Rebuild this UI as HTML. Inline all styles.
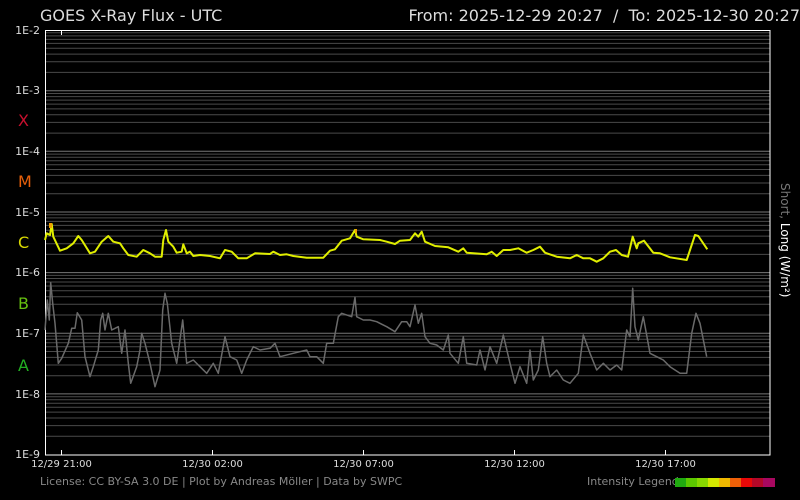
<!DOCTYPE html>
<html><head><meta charset="utf-8"><style>
html,body{margin:0;padding:0;background:#000;width:800px;height:500px;overflow:hidden;font-family:"DejaVu Sans","Liberation Sans",sans-serif}
</style></head><body>
<svg width="800" height="500" style="position:absolute;left:0;top:0">
<defs>
<g id="dec">
<line x1="45" x2="770" y1="2.8" y2="2.8"/><line x1="45" x2="770" y1="5.9" y2="5.9"/>
<line x1="45" x2="770" y1="9.4" y2="9.4"/><line x1="45" x2="770" y1="13.4" y2="13.4"/>
<line x1="45" x2="770" y1="18.2" y2="18.2"/><line x1="45" x2="770" y1="24.1" y2="24.1"/>
<line x1="45" x2="770" y1="31.7" y2="31.7"/><line x1="45" x2="770" y1="42.4" y2="42.4"/>
</g>
</defs>
<g stroke="#4a4a4a" stroke-width="1">
<use href="#dec" y="30"/><use href="#dec" y="90.7"/><use href="#dec" y="151.3"/><use href="#dec" y="212"/>
<use href="#dec" y="272.6"/><use href="#dec" y="333.3"/><use href="#dec" y="393.9"/>
</g>
<g stroke="#777" stroke-width="1">
<line x1="45" x2="770" y1="90.7" y2="90.7"/><line x1="45" x2="770" y1="151.3" y2="151.3"/>
<line x1="45" x2="770" y1="212" y2="212"/><line x1="45" x2="770" y1="272.6" y2="272.6"/>
<line x1="45" x2="770" y1="333.3" y2="333.3"/><line x1="45" x2="770" y1="393.9" y2="393.9"/>
</g>
<rect x="45.5" y="30.5" width="724.5" height="424.5" fill="none" stroke="#fff" stroke-width="1"/>
<g stroke="#fff"><line x1="61.5" x2="61.5" y1="31" y2="35"/>
<line x1="61.5" x2="61.5" y1="450" y2="455"/><line x1="212.5" x2="212.5" y1="450" y2="455"/>
<line x1="363.5" x2="363.5" y1="450" y2="455"/><line x1="514.5" x2="514.5" y1="450" y2="455"/><line x1="665.5" x2="665.5" y1="450" y2="455"/></g>
<polyline fill="none" stroke="#6a6a6a" stroke-width="1.5" stroke-linejoin="round" points="45,330 47.3,300 49.3,320 50.7,282.7 52.7,303.3 55,323.3 58.3,363.3 61.7,358.3 68.3,343.3 71.7,328.3 75,328.3 77.3,312.7 81.7,320 85,356.7 90,376.7 93.3,366.7 98.3,350 100.7,320 102.7,313.3 105,330 108.3,313.3 111.7,330 118.3,326.7 121.7,353.3 125,330 128.3,363.3 130.7,383.3 136.7,366.7 140,350 141.7,333.3 145,343.3 150,363.3 155,386.7 160,370 162.7,310 165,293.3 167.3,303.3 171.7,343.3 176.7,363.3 182.7,320 186.7,363.3 193.3,360 200,366.7 206.7,373.3 213.3,363.3 218.3,373.3 225,336.7 230,356.7 236.7,360 241.7,373.3 246.7,360 253.3,346.7 260,350 270,348.3 275,343.3 280,356.7 293.3,353.3 306.7,350 310,356.7 316.7,356.7 323.3,363.3 326.7,343.3 333.3,343.3 338.3,316.7 341.7,313.3 351.7,316.7 355,297.3 356.7,316.7 363.3,320 370,320 376.7,321.7 386.7,326.7 395,331.7 401.7,321.7 406.7,321.7 410,326.7 415,305 418.3,323.3 421.7,313.3 425,336.7 430,343.3 436.7,345 443.3,350 448.3,335 450,353.3 458.3,363.3 463.3,336.7 466.7,363.3 476.7,365 480,350 485,370 490,346.7 496.7,363.3 503.3,335 510,363.3 515,383.3 520,366.7 526.7,383.3 530,350 533.3,380 538.3,370 542.7,336.7 546.7,363.3 550,376.7 556.7,370 563.3,380 570,383.3 578.3,373.3 583.3,335 590,353.3 596.7,370 603.3,363.3 610,370 616.7,365 621.7,370 626.7,330 630,336.7 632.7,288.3 635,326.7 638.3,340 643.3,316.7 650,353.3 656.7,356.7 663.3,360 670,366.7 680,373.3 686.7,373.3 691.7,333.3 696,313.3 700,323.3 706.7,356.7"/>
<polyline fill="none" stroke="#e0ee00" stroke-width="2" stroke-linejoin="round" points="45,240 46.7,233.3 50,235 51.7,224 53.3,236.7 60,250.7 66.7,248.3 73.3,243.3 78.3,236 81.7,240 90,253.3 95,251.7 101.7,241.7 108.3,236 113.3,241.7 120,243.3 123.3,248.3 128.3,255 136.7,256.7 143.3,250 150,253.3 155,256.7 161.7,256.7 163.3,240 166,230 168.3,241.7 173.3,246.7 176.7,252.7 181.7,251.7 183.3,244.3 186.7,253.3 190,251.7 193.3,256 200,255 210,256 220,258.3 225,250 231.7,251.7 238.3,258.3 246.7,258.3 255,253.3 270,254 273.3,251.7 280,255 286.7,254.3 293.3,256 306.7,257.7 323.3,257.7 330,250.7 335,249.3 341.7,240.7 350,238.3 355,230 356.7,236.7 363.3,239.3 380,240 386.7,241.7 395,244 400,240.7 410,240 415,233.3 418.3,236.7 421.7,231.7 425,241.7 435,246 448.3,247.3 458.3,251.7 463.3,248.3 466.7,252.7 486.7,254.3 491.7,251.7 496.7,256 503.3,250 510,250 518.3,248.3 526.7,252.7 533.3,250 540,246.7 545,252.7 556.7,256.7 570,258.3 576.7,255 583.3,258.3 590,258.3 596.7,261.7 603.3,258.3 610,251.7 616,250 621.7,255 628,256.7 632.7,236.7 636.7,248.3 638.3,243.3 644,240.7 653.3,252.7 660,253.3 670,257.3 686.7,260 686.7,260 695,235 698.3,236 707.3,249.3"/>
<g fill="#f0a000"><rect x="49" y="223" width="3" height="5"/><rect x="355" y="229" width="2" height="4"/></g>
<g fill="#ddd" font-size="11" font-family="DejaVu Sans,Liberation Sans,sans-serif" text-anchor="end">
<text x="40" y="34">1E-2</text><text x="40" y="94">1E-3</text><text x="40" y="155">1E-4</text><text x="40" y="216">1E-5</text>
<text x="40" y="276">1E-6</text><text x="40" y="337">1E-7</text><text x="40" y="398">1E-8</text><text x="40" y="458">1E-9</text>
</g>
<g font-size="16" font-family="DejaVu Sans,Liberation Sans,sans-serif">
<text x="18" y="126" fill="#c8102e">X</text><text x="18" y="187" fill="#e8600a">M</text>
<text x="18" y="248" fill="#d8d800">C</text><text x="18" y="309" fill="#66c010">B</text><text x="18" y="371" fill="#22b022">A</text>
</g>
<g fill="#ddd" font-size="10" font-family="DejaVu Sans,Liberation Sans,sans-serif" text-anchor="middle">
<text x="61.5" y="467">12/29 21:00</text><text x="212.5" y="467">12/30 02:00</text><text x="363.5" y="467">12/30 07:00</text>
<text x="514.5" y="467">12/30 12:00</text><text x="665.5" y="467">12/30 17:00</text>
</g>
<text transform="translate(781,183) rotate(90)" font-size="12" font-family="DejaVu Sans,Liberation Sans,sans-serif"><tspan fill="#777">Short,</tspan><tspan fill="#fff"> Long (W/m²)</tspan></text>
<text x="40" y="21" fill="#ddd" font-size="16" font-family="DejaVu Sans,Liberation Sans,sans-serif">GOES X-Ray Flux - UTC</text>
<text x="800" y="21" fill="#ddd" font-size="16" text-anchor="end" font-family="DejaVu Sans,Liberation Sans,sans-serif" xml:space="preserve">From: 2025-12-29 20:27  /  To: 2025-12-30 20:27</text>
<text x="40" y="485" fill="#888" font-size="11" font-family="DejaVu Sans,Liberation Sans,sans-serif">License: CC BY-SA 3.0 DE | Plot by Andreas Möller | Data by SWPC</text>
<text x="587" y="485" fill="#888" font-size="11" font-family="DejaVu Sans,Liberation Sans,sans-serif">Intensity Legend</text>
<g>
<rect x="675" y="478" width="11" height="9" fill="#20aa10"/><rect x="686" y="478" width="11" height="9" fill="#5cc800"/>
<rect x="697" y="478" width="11" height="9" fill="#88d800"/><rect x="708" y="478" width="11" height="9" fill="#d4e800"/>
<rect x="719" y="478" width="11" height="9" fill="#f0b800"/><rect x="730" y="478" width="11" height="9" fill="#ee6008"/>
<rect x="741" y="478" width="11" height="9" fill="#e80808"/><rect x="752" y="478" width="11" height="9" fill="#b40828"/>
<rect x="763" y="478" width="12" height="9" fill="#a80860"/>
</g>
</svg>
</body></html>
